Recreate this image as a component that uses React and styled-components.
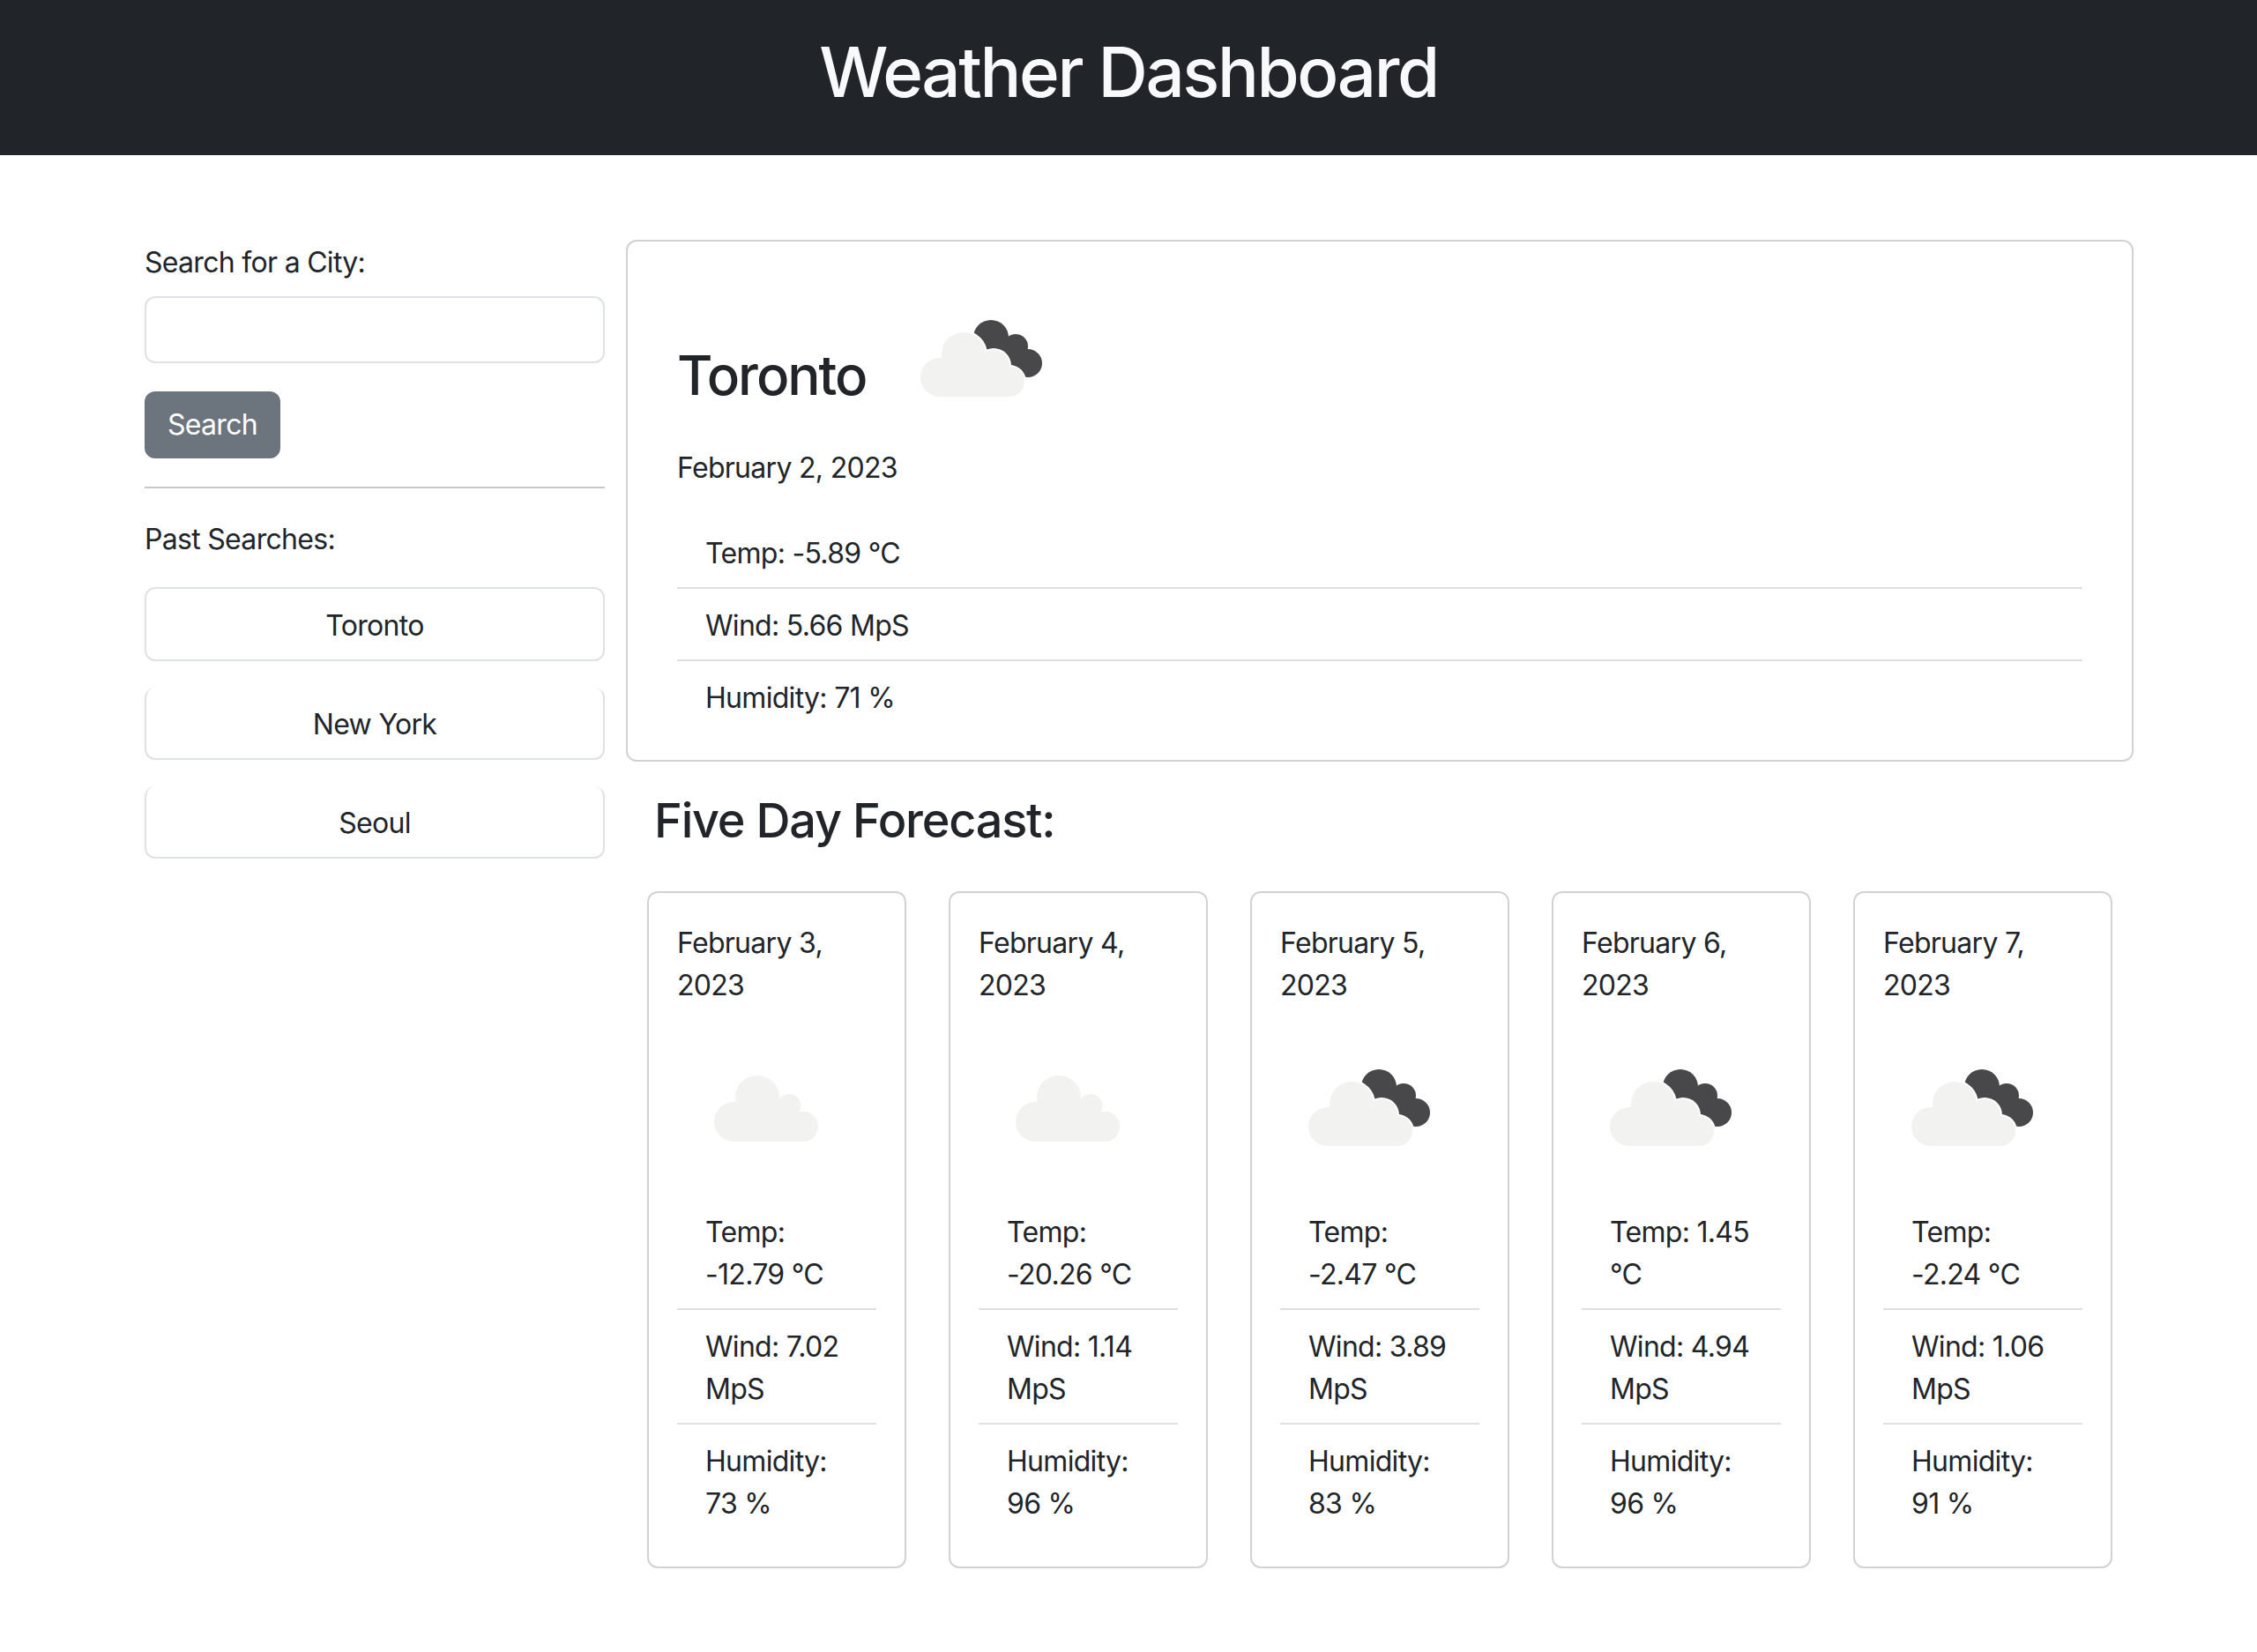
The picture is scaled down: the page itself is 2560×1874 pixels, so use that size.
import React from "react";
import styled, { createGlobalStyle } from "styled-components";

const Global = createGlobalStyle`
  * { box-sizing: border-box; }
  html, body { margin: 0; background: #fff; }
  body {
    font-family: Inter, "Noto Sans", "Liberation Sans", sans-serif;
    font-size: 32px;
    line-height: 48px;
    letter-spacing: -0.7px;
    color: #212529;
    min-height: 1874px;
  }
`;

const Header = styled.header`
  height: 176px;
  background: #212529;
  display: flex;
  justify-content: center;
  align-items: center;
`;
const PageTitle = styled.h1`
  margin: 0 0 13px;
  font-size: 78px;
  line-height: 96px;
  font-weight: 500;
  letter-spacing: -2.4px;
  color: #f8f9fa;
`;
const Main = styled.main`
  display: grid;
  grid-template-columns: 522px 1710px;
  column-gap: 24px;
  padding: 96px 0 0 164px;
  align-items: start;
`;
const Sidebar = styled.aside`
  display: flex;
  flex-direction: column;
`;
const Label = styled.label`
  display: block;
  padding-top: 2px;
  margin-bottom: 14px;
`;
const Input = styled.input`
  display: block;
  width: 100%;
  height: 76px;
  border: 2px solid #dee2e6;
  border-radius: 12px;
  background: #fff;
`;
const SearchButton = styled.button`
  align-self: flex-start;
  margin-top: 32px;
  height: 76px;
  padding: 0 26px;
  border: 0;
  border-radius: 12px;
  background: #6c757d;
  color: #fff;
  font: inherit;
  letter-spacing: inherit;
`;
const Rule = styled.hr`
  width: 100%;
  height: 2px;
  margin: 32px 0;
  border: 0;
  background: #c7c8c9;
`;
const PastLabel = styled.div`
  padding-top: 2px;
  margin-bottom: 30px;
`;
const History = styled.div`
  display: flex;
  flex-direction: column;
  gap: 30px;
`;
const HistoryButton = styled.button`
  width: 100%;
  padding: 18px 32px 14px;
  border: 2px solid #dee2e6;
  border-top-width: ${(p) => (p.$first ? "2px" : "0")};
  border-radius: 12px;
  background: #fff;
  color: #212529;
  font: inherit;
  letter-spacing: inherit;
  text-align: center;
`;
const Content = styled.section`
  display: flex;
  flex-direction: column;
`;
const Card = styled.article`
  border: 2px solid #d2d2d2;
  border-radius: 12px;
  background: #fff;
`;
const TodayCard = styled(Card)`
  height: 592px;
  padding: 18px 56px 0;
`;
const CityRow = styled.div`
  display: flex;
  align-items: flex-end;
  gap: 29px;
  margin-bottom: 15px;
`;
const CityName = styled.h2`
  margin: 0 0 29px;
  font-size: 62px;
  line-height: 74px;
  font-weight: 500;
  letter-spacing: -2px;
`;
const DateText = styled.div`
  margin-bottom: 31px;
`;
const StatList = styled.ul`
  list-style: none;
  margin: 0;
  padding: 0;
`;
const StatItem = styled.li`
  padding: 18px 32px 14px;
  border-bottom: 2px solid #dfdfdf;
  &:last-child { border-bottom: 0; }
`;
const ForecastTitle = styled.h3`
  margin: 33px 0 0 32px;
  font-size: 54px;
  line-height: 68px;
  font-weight: 500;
  letter-spacing: -1.2px;
`;
const ForecastRow = styled.div`
  display: flex;
  gap: 48px;
  margin: 46px 0 0 24px;
`;
const DayCard = styled(Card)`
  width: 294px;
  height: 768px;
  padding: 33px 32px 0;
`;
const DayDate = styled.div`
  height: 96px;
`;
const IconBox = styled.svg`
  display: block;
  width: 200px;
  height: 200px;
  flex: none;
  margin-bottom: ${(p) => p.$gap || 0}px;
`;

const cloudLobes = {
  cloud: [
    [64.5, 130.5, 22.5],
    [91, 103, 25],
    [127, 112.5, 13.5],
    [143, 136, 17],
  ],
  overcast: [
    [54, 136, 22],
    [81, 110, 25],
    [115, 123, 18],
    [133, 141, 17],
  ],
};
const cloudBase = {
  cloud: { x: 64, y: 125, w: 80, h: 28, cx: 90, cy: 105, cw: 40 },
  overcast: { x: 54, y: 130, w: 80, h: 28, cx: 80, cy: 112, cw: 38 },
};

function Weather({ kind, gap }) {
  const lobes = cloudLobes[kind];
  const base = cloudBase[kind];
  return (
    <IconBox viewBox="0 0 200 200" $gap={gap}>
      {kind === "overcast" && (
        <>
          <g fill="#48484a">
            <circle cx="112" cy="91" r="20" />
            <circle cx="140" cy="101" r="14" />
            <circle cx="154" cy="120" r="16" />
            <polygon points="112,91 140,101 154,120 140,135 105,115" />
          </g>
          <g fill="#fff">
            {lobes.map(([x, y, r]) => (
              <circle key={x} cx={x} cy={y} r={r + 2} />
            ))}
          </g>
        </>
      )}
      <g fill="#f2f2f1">
        {lobes.map(([x, y, r]) => (
          <circle key={x} cx={x} cy={y} r={r} />
        ))}
        <rect x={base.x} y={base.y} width={base.w} height={base.h} />
        <rect x={base.cx} y={base.cy} width={base.cw} height={base.y + base.h - base.cy} />
      </g>
    </IconBox>
  );
}

const days = [
  { date: "February 3, 2023", kind: "cloud", temp: "Temp: -12.79 °C", wind: "Wind: 7.02 MpS", hum: "Humidity: 73 %" },
  { date: "February 4, 2023", kind: "cloud", temp: "Temp: -20.26 °C", wind: "Wind: 1.14 MpS", hum: "Humidity: 96 %" },
  { date: "February 5, 2023", kind: "overcast", temp: "Temp: -2.47 °C", wind: "Wind: 3.89 MpS", hum: "Humidity: 83 %" },
  { date: "February 6, 2023", kind: "overcast", temp: "Temp: 1.45 °C", wind: "Wind: 4.94 MpS", hum: "Humidity: 96 %" },
  { date: "February 7, 2023", kind: "overcast", temp: "Temp: -2.24 °C", wind: "Wind: 1.06 MpS", hum: "Humidity: 91 %" },
];

export default function App() {
  return (
    <>
      <Global />
      <Header>
        <PageTitle>Weather Dashboard</PageTitle>
      </Header>
      <Main>
        <Sidebar>
          <Label htmlFor="city">Search for a City:</Label>
          <Input id="city" type="text" />
          <SearchButton>Search</SearchButton>
          <Rule />
          <PastLabel>Past Searches:</PastLabel>
          <History>
            <HistoryButton $first>Toronto</HistoryButton>
            <HistoryButton>New York</HistoryButton>
            <HistoryButton>Seoul</HistoryButton>
          </History>
        </Sidebar>
        <Content>
          <TodayCard>
            <CityRow>
              <CityName>Toronto</CityName>
              <Weather kind="overcast" />
            </CityRow>
            <DateText>February 2, 2023</DateText>
            <StatList>
              <StatItem>Temp: -5.89 °C</StatItem>
              <StatItem>Wind: 5.66 MpS</StatItem>
              <StatItem>Humidity: 71 %</StatItem>
            </StatList>
          </TodayCard>
          <ForecastTitle>Five Day Forecast:</ForecastTitle>
          <ForecastRow>
            {days.map((d) => (
              <DayCard key={d.date}>
                <DayDate>{d.date}</DayDate>
                <Weather kind={d.kind} gap={14} />
                <StatList>
                  <StatItem>{d.temp}</StatItem>
                  <StatItem>{d.wind}</StatItem>
                  <StatItem>{d.hum}</StatItem>
                </StatList>
              </DayCard>
            ))}
          </ForecastRow>
        </Content>
      </Main>
    </>
  );
}
